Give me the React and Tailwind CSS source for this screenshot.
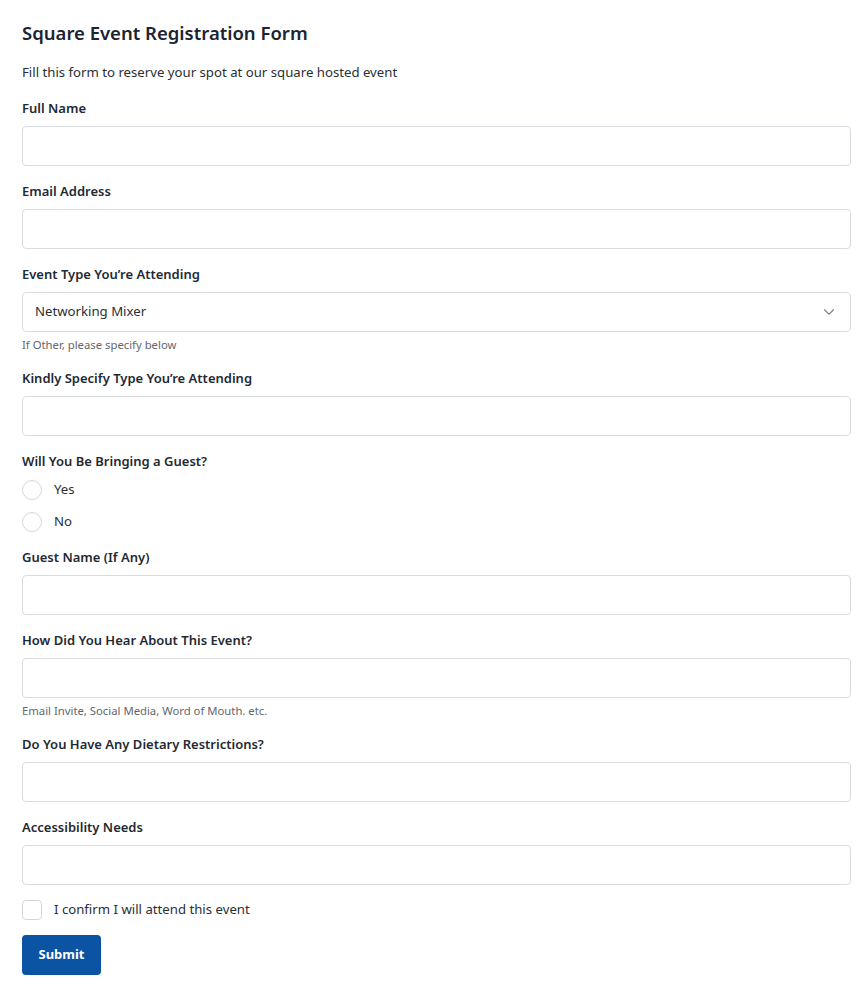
import { ChevronDown } from 'lucide-react';

const font = { fontFamily: '"Noto Sans", "Open Sans", Arial, sans-serif' };

function Label({ children }) {
  return <div className="text-[13px] leading-[20px] font-semibold text-[#1f2933] mb-2">{children}</div>;
}

function TextInput() {
  return <input type="text" className="block w-full h-10 rounded border border-[#d9dde1] bg-white px-3 text-[13px] outline-none" />;
}

function Hint({ children }) {
  return <div className="mt-[5px] mb-[2px] text-[11.3px] leading-4 text-[#5f6770]">{children}</div>;
}

function Field({ label, hint }) {
  return (
    <div className="mb-[15px]">
      <Label>{label}</Label>
      <TextInput />
      {hint && <Hint>{hint}</Hint>}
    </div>
  );
}

function Radio({ label }) {
  return (
    <label className="flex items-center h-5 gap-3">
      <span className="w-5 h-5 rounded-full border border-[#d3d7db] bg-white" />
      <span className="text-[13.2px] text-[#2a2f35]">{label}</span>
    </label>
  );
}

export default function App() {
  return (
    <div className="bg-white pl-[22px] pr-[11px] pt-[19px] pb-3" style={font}>
      <h1 className="text-[18.5px] leading-[28px] font-semibold text-[#1b2430] mb-[15px]">Square Event Registration Form</h1>
      <p className="text-[13.2px] leading-5 text-[#2a2f35] mb-4">Fill this form to reserve your spot at our square hosted event</p>

      <Field label="Full Name" />
      <Field label="Email Address" />

      <div className="mb-[15px]">
        <Label>Event Type You’re Attending</Label>
        <div className="flex items-center justify-between h-10 rounded border border-[#d9dde1] bg-white pl-3 pr-[12px]">
          <span className="text-[13.2px] text-[#2a2f35]">Networking Mixer</span>
          <ChevronDown size={18} strokeWidth={1.5} className="text-[#7d848c]" />
        </div>
        <Hint>If Other, please specify below</Hint>
      </div>

      <Field label="Kindly Specify Type You’re Attending" />

      <div className="mb-[15px]">
        <Label>Will You Be Bringing a Guest?</Label>
        <div className="flex flex-col gap-3 pt-px">
          <Radio label="Yes" />
          <Radio label="No" />
        </div>
      </div>

      <Field label="Guest Name (If Any)" />
      <Field label="How Did You Hear About This Event?" hint="Email Invite, Social Media, Word of Mouth. etc." />
      <Field label="Do You Have Any Dietary Restrictions?" />
      <Field label="Accessibility Needs" />

      <label className="flex items-center h-5 gap-3 mt-px mb-[15px]">
        <span className="w-5 h-5 rounded border border-[#d3d7db] bg-white" />
        <span className="text-[13.2px] text-[#2a2f35]">I confirm I will attend this event</span>
      </label>

      <button className="h-10 w-[79px] rounded bg-[#0b54a4] text-white text-[13px] font-bold">Submit</button>
    </div>
  );
}
